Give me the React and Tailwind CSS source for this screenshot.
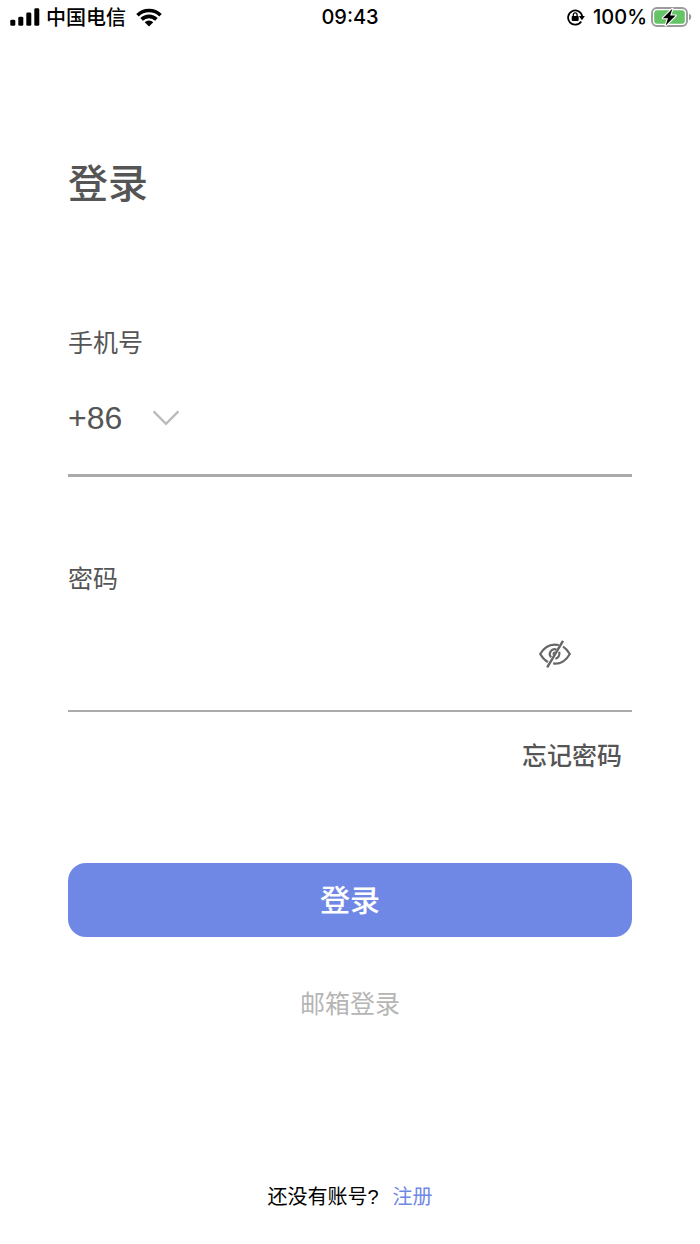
import { useState } from "react";

function SignalIcon() {
  return (
    <svg width="30" height="18" viewBox="0 0 30 18" aria-hidden="true">
      <rect x="0.3" y="11.8" width="5" height="6" rx="1.4" />
      <rect x="8.3" y="8.8" width="5" height="9" rx="1.4" />
      <rect x="16.3" y="4.6" width="5" height="13.2" rx="1.4" />
      <rect x="24.3" y="0.3" width="5" height="17.5" rx="1.4" />
    </svg>
  );
}

function WifiIcon() {
  return (
    <svg width="26" height="19" viewBox="0 0 26 19" aria-hidden="true">
      <g fill="none" stroke="#000" strokeWidth="3.6">
        <path d="M1.5 7.2a16.4 16.4 0 0 1 23 0" />
        <path d="M5.6 11.4a10.6 10.6 0 0 1 14.8 0" />
      </g>
      <path d="M8.7 14.2a6.2 6.2 0 0 1 8.6 0L13 18.6z" />
    </svg>
  );
}

function RotationLockIcon() {
  return (
    <svg width="18" height="18" viewBox="0 0 18 18" aria-hidden="true">
      <path
        d="M14.2 13.4A7.1 7.1 0 1 1 15.2 8.4"
        fill="none"
        stroke="#000"
        strokeWidth="1.8"
      />
      <path d="M11.9 8h6l-3 4.2z" />
      <rect x="4.7" y="7.9" width="7" height="5" rx="0.8" />
      <path d="M6.3 8.4V6.7a1.9 1.9 0 0 1 3.8 0v1.7" fill="none" stroke="#000" strokeWidth="1.3" />
    </svg>
  );
}

function BatteryIcon() {
  return (
    <svg width="41" height="20" viewBox="0 0 41 20" aria-hidden="true">
      <rect x="1" y="1" width="35" height="18" rx="5" fill="none" stroke="#9b9b9b" strokeWidth="1.9" />
      <path d="M38 6.8c3 1 3 5.4 0 6.4z" fill="#9b9b9b" />
      <rect x="3.2" y="3.2" width="30.6" height="13.6" rx="3" fill="#65c466" />
      <path
        d="M21.4 1.8 11.8 11.2h5.2l-2.4 7.2 10-9.8h-5.4z"
        fill="#000"
        stroke="#fff"
        strokeWidth="2.2"
        strokeLinejoin="round"
        paintOrder="stroke"
      />
    </svg>
  );
}

function EyeOffIcon() {
  return (
    <svg width="32" height="28" viewBox="0 0 32 28" fill="none" stroke="#666" strokeWidth="2.2" aria-hidden="true">
      <path d="M19.8 5C10.8 3 4.6 8.2 1.2 14c1.9 3.4 4.6 6.3 7.8 8.1" />
      <path d="M24 6.6c2.8 1.7 5.1 4.4 6.8 7.4-3.4 6.2-9.4 10.6-16.6 9.4" />
      <path d="M17.4 9.6a4.7 4.7 0 0 0-5.2 7.6" />
      <path d="M16 12.4a2 2 0 0 0-1.8 2.2" strokeWidth="1.6" />
      <path d="M20.2 11.8c1 3.4-.9 6.3-3.9 7" />
      <path d="M24 .8 8.2 27.4" strokeWidth="2.4" />
    </svg>
  );
}

function StatusBar() {
  return (
    <header className="grid h-[34px] grid-cols-3 items-center px-2 text-[20px] leading-7 text-black">
      <div className="flex items-center pl-[2px]">
        <SignalIcon />
        <span className="mr-[10px] ml-[6px] pt-[2px] font-medium">中国电信</span>
        <WifiIcon />
      </div>
      <time className="text-center font-['Inter'] text-[20px] font-medium">09:43</time>
      <div className="flex items-center justify-end">
        <RotationLockIcon />
        <span className="mr-1 ml-2 font-['Inter'] text-[20px] font-medium">100%</span>
        <BatteryIcon />
      </div>
    </header>
  );
}

export default function App() {
  const [visible, setVisible] = useState(false);

  return (
    <div className="flex min-h-screen flex-col bg-white font-['Liberation_Sans','Noto_Sans_CJK_SC',sans-serif] text-[#555]">
      <StatusBar />
      <main className="flex flex-1 flex-col px-[68px] pt-[126px] pb-[31px]">
        <h1 className="text-[40px] leading-[48px] font-medium">登录</h1>
        <form className="mt-[119px] flex flex-col" onSubmit={(e) => e.preventDefault()}>
          <label htmlFor="phone" className="text-[25px] leading-8">手机号</label>
          <div className="mt-[27px] flex items-center border-b-3 border-[#aaa] pb-6">
            <div className="grid h-16 w-28 items-center">
              <select
                aria-label="国家或地区代码"
                className="col-start-1 row-start-1 h-16 w-full appearance-none bg-transparent text-[32px] outline-none"
              >
                <option>+86</option>
                <option>+852</option>
                <option>+1</option>
              </select>
              <svg
                className="pointer-events-none col-start-1 row-start-1 justify-self-end"
                width="28" height="16" viewBox="0 0 28 16"
                fill="none" stroke="#bbb" strokeWidth="2.4" aria-hidden="true"
              >
                <path d="M1.6 1.4 14 13.8 26.4 1.4" />
              </svg>
            </div>
            <input id="phone" type="tel" className="ml-6 h-16 min-w-0 flex-1 text-[32px] outline-none" />
          </div>

          <label htmlFor="password" className="mt-[86px] text-[25px] leading-8">密码</label>
          <div className="mt-[27px] flex items-center border-b-2 border-[#aaa] pr-[61px] pb-6">
            <input
              id="password"
              type={visible ? "text" : "password"}
              className="h-16 min-w-0 flex-1 text-[32px] outline-none"
            />
            <button type="button" aria-label="显示密码" aria-pressed={visible} onClick={() => setVisible(!visible)}>
              <EyeOffIcon />
            </button>
          </div>

          <a href="#forgot" className="mt-[28px] mr-[10px] self-end text-[25px] leading-8 font-medium">忘记密码</a>
          <button type="submit" className="mt-[91px] h-[74px] rounded-[18px] bg-[#7088e5] text-[30px] font-medium text-white">
            登录
          </button>
        </form>
        <a href="#email" className="mt-[51px] self-center text-[25px] leading-8 text-[#b5b5b5]">邮箱登录</a>
        <p className="mt-auto flex justify-center gap-[14px] pt-8 text-[20px] leading-8 text-black">
          <span>还没有账号?</span>
          <a href="#register" className="text-[#7088e5]">注册</a>
        </p>
      </main>
    </div>
  );
}
